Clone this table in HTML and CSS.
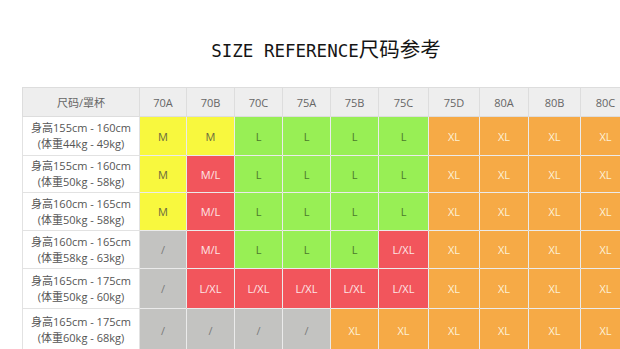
FILE: index.html
```html
<!DOCTYPE html>
<html>
<head>
<meta charset="utf-8">
<link rel="stylesheet" href="styles.css">
</head>
<body>
<div class="page">
  <h1 class="title"><span class="latin">SIZE REFERENCE</span><span class="cjk">尺码参考</span></h1>
  <table class="size-table">
    <colgroup>
      <col class="c-label"><col class="c47"><col class="c48"><col class="c48"><col class="c48"><col class="c48"><col class="c50"><col class="c51"><col class="c49"><col class="c52"><col class="c50">
    </colgroup>
    <thead>
      <tr class="r-head">
        <th>尺码/罩杯</th><th>70A</th><th>70B</th><th>70C</th><th>75A</th><th>75B</th><th>75C</th><th>75D</th><th>80A</th><th>80B</th><th>80C</th>
      </tr>
    </thead>
    <tbody>
      <tr class="r1">
        <td class="label">身高155cm - 160cm<br>(体重44kg - 49kg)</td>
        <td class="y">M</td><td class="y">M</td><td class="g">L</td><td class="g">L</td><td class="g">L</td><td class="g">L</td><td class="o">XL</td><td class="o">XL</td><td class="o">XL</td><td class="o">XL</td>
      </tr>
      <tr class="r2">
        <td class="label">身高155cm - 160cm<br>(体重50kg - 58kg)</td>
        <td class="y">M</td><td class="r">M/L</td><td class="g">L</td><td class="g">L</td><td class="g">L</td><td class="g">L</td><td class="o">XL</td><td class="o">XL</td><td class="o">XL</td><td class="o">XL</td>
      </tr>
      <tr class="r3">
        <td class="label">身高160cm - 165cm<br>(体重50kg - 58kg)</td>
        <td class="y">M</td><td class="r">M/L</td><td class="g">L</td><td class="g">L</td><td class="g">L</td><td class="g">L</td><td class="o">XL</td><td class="o">XL</td><td class="o">XL</td><td class="o">XL</td>
      </tr>
      <tr class="r4">
        <td class="label">身高160cm - 165cm<br>(体重58kg - 63kg)</td>
        <td class="n">/</td><td class="r">M/L</td><td class="g">L</td><td class="g">L</td><td class="g">L</td><td class="r">L/XL</td><td class="o">XL</td><td class="o">XL</td><td class="o">XL</td><td class="o">XL</td>
      </tr>
      <tr class="r5">
        <td class="label">身高165cm - 175cm<br>(体重50kg - 60kg)</td>
        <td class="n">/</td><td class="r">L/XL</td><td class="r">L/XL</td><td class="r">L/XL</td><td class="r">L/XL</td><td class="r">L/XL</td><td class="o">XL</td><td class="o">XL</td><td class="o">XL</td><td class="o">XL</td>
      </tr>
      <tr class="r6">
        <td class="label">身高165cm - 175cm<br>(体重60kg - 68kg)</td>
        <td class="n">/</td><td class="n">/</td><td class="n">/</td><td class="n">/</td><td class="o">XL</td><td class="o">XL</td><td class="o">XL</td><td class="o">XL</td><td class="o">XL</td><td class="o">XL</td>
      </tr>
    </tbody>
  </table>
</div>
</body>
</html>
```

FILE: styles.css
```css
html, body {
  margin: 0;
  padding: 0;
  background: #ffffff;
  overflow: hidden;
}
.page {
  width: 620px;
  height: 349px;
  overflow: hidden;
  padding-left: 22px;
  box-sizing: border-box;
}
.title {
  margin: 0 0 0 -22px;
  width: 620px;
  height: 87px;
  padding: 34px 0 0 32px;
  box-sizing: border-box;
  text-align: center;
  font-weight: normal;
  color: #151515;
  line-height: 24px;
  white-space: nowrap;
}
.title .latin {
  font-family: "DejaVu Sans Mono", "Liberation Mono", monospace;
  font-size: 17.5px;
  font-weight: normal;
  letter-spacing: 0;
}
.title .cjk {
  font-family: "Noto Sans CJK SC", sans-serif;
  font-size: 20.5px;
  font-weight: 400;
}
.size-table {
  border-collapse: collapse;
  table-layout: fixed;
  width: 609px;
  font-family: "Open Sans", "Noto Sans CJK SC", sans-serif;
  font-size: 11px;
  color: #666;
}
col.c-label { width: 117px; }
col.c47 { width: 47px; }
col.c48 { width: 48px; }
col.c49 { width: 49px; }
col.c50 { width: 50px; }
col.c51 { width: 51px; }
col.c52 { width: 52px; }
th, td {
  padding: 0;
  text-align: center;
  vertical-align: middle;
  border: 1px solid rgba(0, 0, 0, 0.08);
  overflow: hidden;
  white-space: nowrap;
}
th {
  background: #eeeeee;
  font-weight: normal;
  color: #666;
  font-size: 11px;
  border-color: #dddddd;
}
.r-head { height: 29px; }
.r1 { height: 39px; }
.r2 { height: 37px; }
.r3 { height: 38px; }
.r4 { height: 38px; }
.r5 { height: 40px; }
.r6 { height: 43px; }
td.label {
  background: #ffffff;
  color: #555;
  font-size: 11px;
  line-height: 16px;
  border-color: #e2e2e2;
}
td.y { background: #f8f83e; color: #6a6a40; }
td.g { background: #98ef55; color: #4c7a2c; }
td.r { background: #f2555c; color: #fde6e6; }
td.o { background: #f6aa46; color: #fdf1d6; }
td.n { background: #c3c3c1; color: #7a7a7a; }
```
